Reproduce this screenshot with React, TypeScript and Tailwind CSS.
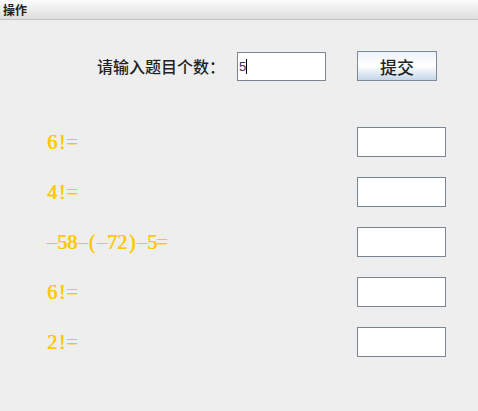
const questions = ["6!=", "4!=", "-58-(-72)-5=", "6!=", "2!="];

function AnswerBox() {
  return <div className="w-[89px] h-[30px] bg-white border border-[#7b8590]" />;
}

// each char sits in a 10px cell, like the half-width glyphs of the original font
function Question({ text }: { text: string }) {
  return (
    <span className="flex text-[20px] text-[#ffc800] font-['Liberation_Serif',serif] leading-none [text-shadow:0.7px_0_0_#ffc800]">
      {text.split("").map((c, i) => (
        <span key={i} className="w-[10px] flex justify-center">
          {c === "-" ? "\u2013" : c}
        </span>
      ))}
    </span>
  );
}

export default function App() {
  return (
    <div className="w-[478px] h-[411px] bg-[#eeeeee] flex flex-col overflow-hidden">
      {/* title bar */}
      <div className="h-[20px] bg-gradient-to-b from-[#fbfbfb] to-[#dedede] border-b border-[#c4c4c4] flex items-center pl-[3px]">
        <span className="text-[12px] font-bold text-[#222] leading-none font-['Noto_Sans_CJK_SC',sans-serif]">操作</span>
      </div>

      {/* input row */}
      <div className="mt-[31px] flex items-center h-[30px]">
        <span className="ml-[97px] text-[16px] font-medium text-[#222] font-['Noto_Sans_CJK_SC',sans-serif] leading-none">
          请输入题目个数：
        </span>
        <div className="ml-[12px] w-[89px] h-[29px] bg-white border border-[#7b8590] flex items-center pl-[1px]">
          <span className="text-[13px] text-[#333355] font-['Liberation_Sans',sans-serif] leading-none">5</span>
          <span className="w-px h-[15px] bg-black" />
        </div>
        <button className="ml-[31px] w-[80px] h-[30px] border border-[#7b8a9b] bg-gradient-to-b from-[#eef3f9] via-white to-[#c5d6e8] text-[17px] font-medium text-[#222] font-['Noto_Sans_CJK_SC',sans-serif] leading-none">
          提交
        </button>
      </div>

      {/* questions */}
      <div className="mt-[46px] flex flex-col gap-[20px]">
        {questions.map((q, i) => (
          <div key={i} className="flex items-center h-[30px]">
            <div className="ml-[47px] flex-1">
              <Question text={q} />
            </div>
            <div className="mr-[32px]">
              <AnswerBox />
            </div>
          </div>
        ))}
      </div>
    </div>
  );
}
